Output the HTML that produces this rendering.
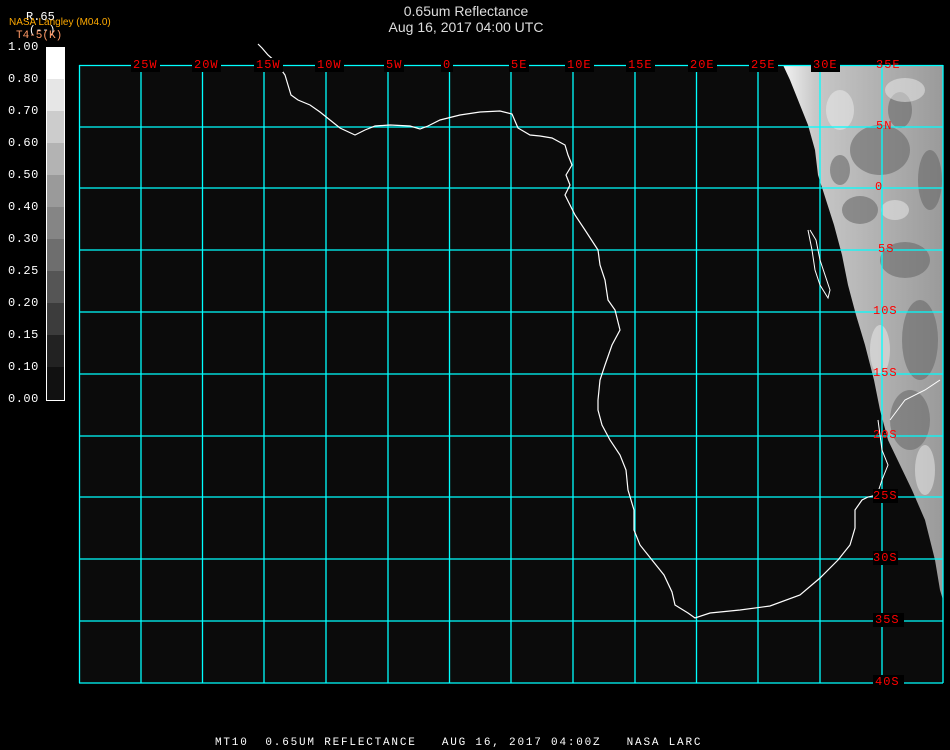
<!DOCTYPE html>
<html><head><meta charset="utf-8"><style>
body{margin:0;background:#000;width:950px;height:750px;overflow:hidden;position:relative;font-family:"Liberation Sans",sans-serif}
.t{position:absolute;white-space:nowrap}
.mono{font-family:"Liberation Mono",monospace}
</style></head><body>
<svg width="950" height="750" style="position:absolute;left:0;top:0">
<defs>
<linearGradient id="cg" x1="0" y1="0" x2="1" y2="0">
<stop offset="0" stop-color="#f2f2f2"/><stop offset="0.2" stop-color="#c8c8c8"/><stop offset="1" stop-color="#9a9a9a"/>
</linearGradient>
</defs>
<rect x="79" y="65" width="864" height="618" fill="#0b0b0b"/>
<polygon fill="url(#cg)" points="783,65 943,65 943,600 940,590 935,560 925,520 912,490 900,465 888,440 880,410 874,380 865,345 856,315 848,285 842,255 834,225 826,200 818,175 815,150 808,125 798,100 790,80"/>
<g fill="#6a6a6a" opacity="0.6">
<ellipse cx="880" cy="150" rx="30" ry="25"/><ellipse cx="905" cy="260" rx="25" ry="18"/>
<ellipse cx="920" cy="340" rx="18" ry="40"/><ellipse cx="860" cy="210" rx="18" ry="14"/>
<ellipse cx="930" cy="180" rx="12" ry="30"/><ellipse cx="910" cy="420" rx="20" ry="30"/>
<ellipse cx="840" cy="170" rx="10" ry="15"/><ellipse cx="900" cy="110" rx="12" ry="18"/>
</g>
<g fill="#eeeeee" opacity="0.5">
<ellipse cx="840" cy="110" rx="14" ry="20"/><ellipse cx="905" cy="90" rx="20" ry="12"/>
<ellipse cx="895" cy="210" rx="14" ry="10"/><ellipse cx="880" cy="350" rx="10" ry="25"/>
<ellipse cx="925" cy="470" rx="10" ry="25"/>
</g>
<g stroke="#00ffff" stroke-width="1.3" fill="none">
<path d="M79.5 65V683M141 65V683M202.5 65V683M264 65V683M326 65V683M388 65V683M449.5 65V683M511 65V683M573 65V683M635 65V683M696.5 65V683M758 65V683M820 65V683M882 65V683M943 65V683"/>
<path d="M79 65.5H943M79 127H943M79 188H943M79 250H943M79 312H943M79 374H943M79 436H943M79 497H943M79 559H943M79 621H943M79 683H943"/>
</g>
<polyline fill="none" stroke="#fff" stroke-width="1.2" points="258,44 262,48 268,55 276,62 280,68 285,75 288,85 291,95 298,100 310,105 320,112 330,120 340,128 355,135 365,130 375,126 390,125 410,126 420,129 428,126 440,120 460,115 480,112 500,111 512,114 518,128 530,135 540,136 552,138 565,145 568,155 572,165 566,175 570,185 565,195 575,215 585,230 598,250 600,265 605,280 608,300 615,310 620,330 612,345 605,365 600,380 598,400 598,410 602,425 610,440 620,455 626,470 628,490 634,510 634,530 640,545 652,560 664,575 672,592 675,605 688,613 695,618 710,613 740,610 770,606 800,595 820,578 838,560 850,545 855,528 855,510 862,500 868,497"/>
<polyline fill="none" stroke="#fff" stroke-width="1" points="868,497 877,495 882,480 888,465 882,450 880,435 878,420"/>
<polyline fill="none" stroke="#fff" stroke-width="1" points="808,230 812,250 815,270 820,285 828,298 830,290 825,275 820,260 816,240 810,230"/>
<polyline fill="none" stroke="#fff" stroke-width="1" points="890,420 905,400 925,390 940,380"/>
<rect x="46" y="47" width="18" height="32" fill="#fff"/>
<rect x="46" y="79" width="18" height="32" fill="#e6e6e6"/>
<rect x="46" y="111" width="18" height="32" fill="#cccccc"/>
<rect x="46" y="143" width="18" height="32" fill="#b3b3b3"/>
<rect x="46" y="175" width="18" height="32" fill="#9a9a9a"/>
<rect x="46" y="207" width="18" height="32" fill="#858585"/>
<rect x="46" y="239" width="18" height="32" fill="#6e6e6e"/>
<rect x="46" y="271" width="18" height="32" fill="#555"/>
<rect x="46" y="303" width="18" height="32" fill="#3c3c3c"/>
<rect x="46" y="335" width="18" height="32" fill="#222"/>
<rect x="46" y="367" width="18" height="33" fill="#111"/>
<rect x="46.5" y="47.5" width="18" height="353" fill="none" stroke="#fff" stroke-width="1"/>
</svg>
<div class="t" style="left:0;width:932px;text-align:center;top:3px;color:#ddd;font-size:14px;line-height:16px">0.65um Reflectance<br>Aug 16, 2017 04:00 UTC</div>
<div class="t mono" style="left:26px;top:10px;color:#fff;font-size:12px">R.65</div>
<div class="t mono" style="left:29px;top:25px;color:#fff;font-size:11px">(--)</div>
<div class="t" style="left:9px;top:17px;color:#ffaa00;font-size:10px">NASA Langley (M04.0)</div>
<div class="t mono" style="left:16px;top:30px;color:#ff9966;font-size:11px">T4-5(K)</div>
<div class="t mono" style="left:8px;top:31px;color:#fff;font-size:12px;line-height:32px;letter-spacing:0.5px">1.00<br>0.80<br>0.70<br>0.60<br>0.50<br>0.40<br>0.30<br>0.25<br>0.20<br>0.15<br>0.10<br>0.00</div>
<div class="mono" style="color:#f00;font-size:12px;letter-spacing:1px">
<span class="t" style="left:131px;top:58px;background:#000;padding:0 2px">25W</span>
<span class="t" style="left:192px;top:58px;background:#000;padding:0 2px">20W</span>
<span class="t" style="left:254px;top:58px;background:#000;padding:0 2px">15W</span>
<span class="t" style="left:315px;top:58px;background:#000;padding:0 2px">10W</span>
<span class="t" style="left:384px;top:58px;background:#000;padding:0 2px">5W</span>
<span class="t" style="left:441px;top:58px;background:#000;padding:0 2px">0</span>
<span class="t" style="left:509px;top:58px;background:#000;padding:0 2px">5E</span>
<span class="t" style="left:565px;top:58px;background:#000;padding:0 2px">10E</span>
<span class="t" style="left:626px;top:58px;background:#000;padding:0 2px">15E</span>
<span class="t" style="left:688px;top:58px;background:#000;padding:0 2px">20E</span>
<span class="t" style="left:749px;top:58px;background:#000;padding:0 2px">25E</span>
<span class="t" style="left:811px;top:58px;background:#000;padding:0 2px">30E</span>
<span class="t" style="left:874px;top:58px;padding:0 2px">35E</span>
<span class="t" style="left:876px;top:119px">5N</span>
<span class="t" style="left:875px;top:180px">0</span>
<span class="t" style="left:878px;top:242px">5S</span>
<span class="t" style="left:873px;top:304px">10S</span>
<span class="t" style="left:873px;top:366px">15S</span>
<span class="t" style="left:873px;top:428px">20S</span>
<span class="t" style="left:873px;top:489px;background:#000">25S</span>
<span class="t" style="left:873px;top:551px;background:#000">30S</span>
<span class="t" style="left:873px;top:613px;background:#000;padding:0 4px 0 2px">35S</span>
<span class="t" style="left:873px;top:675px;background:#000;padding:0 4px 0 2px">40S</span>
</div>
<div class="t mono" style="left:215px;top:737px;color:#fff;font-size:11px;letter-spacing:1.8px;white-space:pre">MT10  0.65UM REFLECTANCE   AUG 16, 2017 04:00Z   NASA LARC</div>
</body></html>
